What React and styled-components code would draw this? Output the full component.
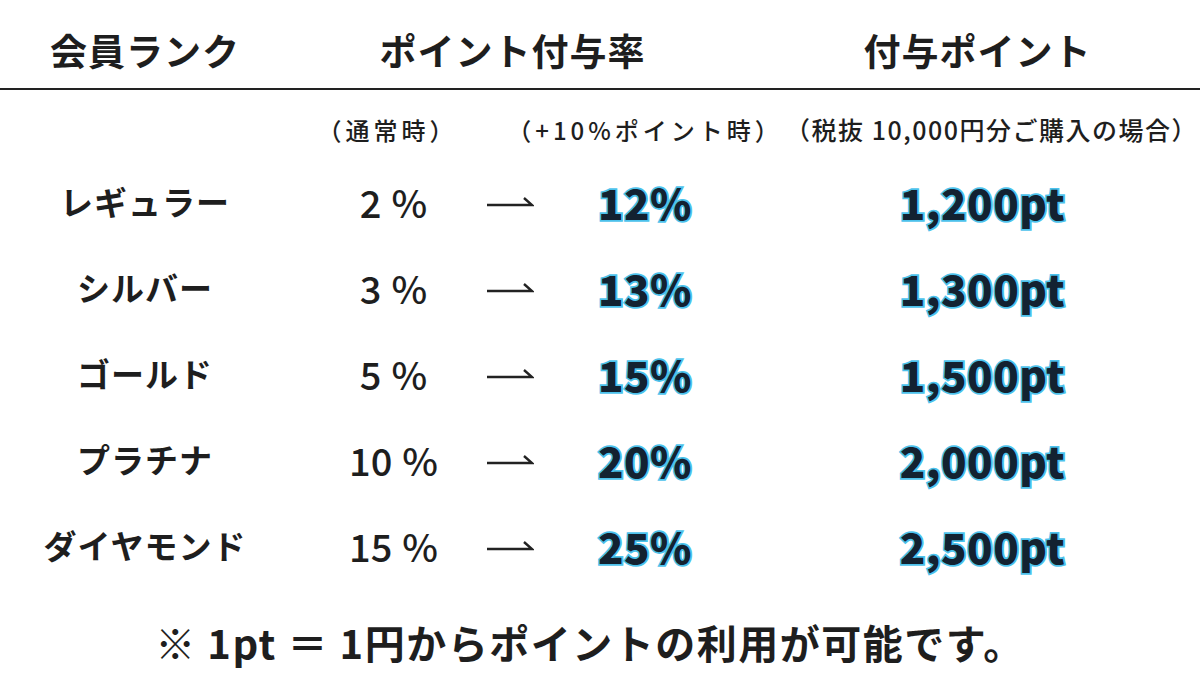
import styled, { createGlobalStyle } from "styled-components";

const GlobalStyle = createGlobalStyle`
  html, body {
    margin: 0;
    padding: 0;
    background: #fff;
  }
  body {
    font-family: "Noto Sans CJK JP", "Noto Sans", sans-serif;
    color: #1e1e1e;
  }
`;

const COLUMNS = "290px 195px 50px 220px 1fr";

const Page = styled.div`
  width: 1200px;
  height: 690px;
  overflow: hidden;
  background: #fff;
`;

const HeaderRow = styled.div`
  display: grid;
  grid-template-columns: ${COLUMNS};
  align-items: center;
  height: 90px;
  padding-top: 12px;
  box-sizing: border-box;
  border-bottom: 2px solid #222;
`;

const HeadCell = styled.div`
  grid-column: ${(p) => p.$col || "auto"};
  display: flex;
  justify-content: center;
  padding-right: ${(p) => p.$pr || 0}px;
  padding-left: ${(p) => p.$pl || 0}px;
  font-size: 37px;
  font-weight: 700;
  letter-spacing: 1px;
  white-space: nowrap;
`;

const SubRow = styled.div`
  display: grid;
  grid-template-columns: ${COLUMNS};
  align-items: center;
  height: 68px;
  padding-top: 10px;
  box-sizing: border-box;
`;

const SubCell = styled.div`
  grid-column: ${(p) => p.$col};
  display: flex;
  justify-content: center;
  padding-left: ${(p) => p.$pl || 0}px;
  font-size: ${(p) => p.$size || 24}px;
  font-weight: 500;
  letter-spacing: ${(p) => p.$ls ?? 4}px;
  white-space: nowrap;
`;

const Row = styled.div`
  display: grid;
  grid-template-columns: ${COLUMNS};
  align-items: center;
  height: 86px;
`;

const Cell = styled.div`
  display: flex;
  justify-content: center;
  align-items: center;
  padding-left: ${(p) => p.$pl || 0}px;
  white-space: nowrap;
`;

const Rank = styled(Cell)`
  font-size: 33px;
  font-weight: 700;
  letter-spacing: 1px;
`;

const Rate = styled(Cell)`
  font-size: 38px;
  font-weight: 500;
  padding-left: 12px;
  gap: 10px;
`;

const Highlight = styled(Cell)`
  font-size: 42px;
  font-weight: 900;
  color: #132231;
  -webkit-text-stroke: 3.5px #4cc2ec;
  paint-order: stroke fill;
  letter-spacing: 0.5px;
`;

const Footer = styled.div`
  display: flex;
  justify-content: center;
  padding: 34px 20px 0 0;
  line-height: 40px;
  font-size: 40px;
  font-weight: 700;
  letter-spacing: 1.5px;
  white-space: pre;
`;

function Arrow() {
  return (
    <svg width="48" height="16" viewBox="0 0 48 16">
      <path d="M1 12 H46 L38 5" fill="none" stroke="#222" strokeWidth="2.4" strokeLinejoin="miter" />
    </svg>
  );
}

const ranks = [
  { name: "レギュラー", rate: "2", plus: "12%", pt: "1,200pt" },
  { name: "シルバー", rate: "3", plus: "13%", pt: "1,300pt" },
  { name: "ゴールド", rate: "5", plus: "15%", pt: "1,500pt" },
  { name: "プラチナ", rate: "10", plus: "20%", pt: "2,000pt" },
  { name: "ダイヤモンド", rate: "15", plus: "25%", pt: "2,500pt" },
];

export default function App() {
  return (
    <Page>
      <GlobalStyle />
      <HeaderRow>
        <HeadCell $col="1">会員ランク</HeadCell>
        <HeadCell $col="2 / 5" $pr={20}>ポイント付与率</HeadCell>
        <HeadCell $col="5">付与ポイント</HeadCell>
      </HeaderRow>
      <SubRow>
        <SubCell $col="2">（通常時）</SubCell>
        <SubCell $col="4">（+10%ポイント時）</SubCell>
        <SubCell $col="5" $pl={28} $size={25} $ls={1.5}>（税抜 10,000円分ご購入の場合）</SubCell>
      </SubRow>
      {ranks.map((r) => (
        <Row key={r.name}>
          <Rank>{r.name}</Rank>
          <Rate>
            <span>{r.rate}</span>
            <span>%</span>
          </Rate>
          <Cell><Arrow /></Cell>
          <Highlight>{r.plus}</Highlight>
          <Highlight $pl={10}>{r.pt}</Highlight>
        </Row>
      ))}
      <Footer>{"※ 1pt ＝ 1円からポイントの利用が可能です。"}</Footer>
    </Page>
  );
}
